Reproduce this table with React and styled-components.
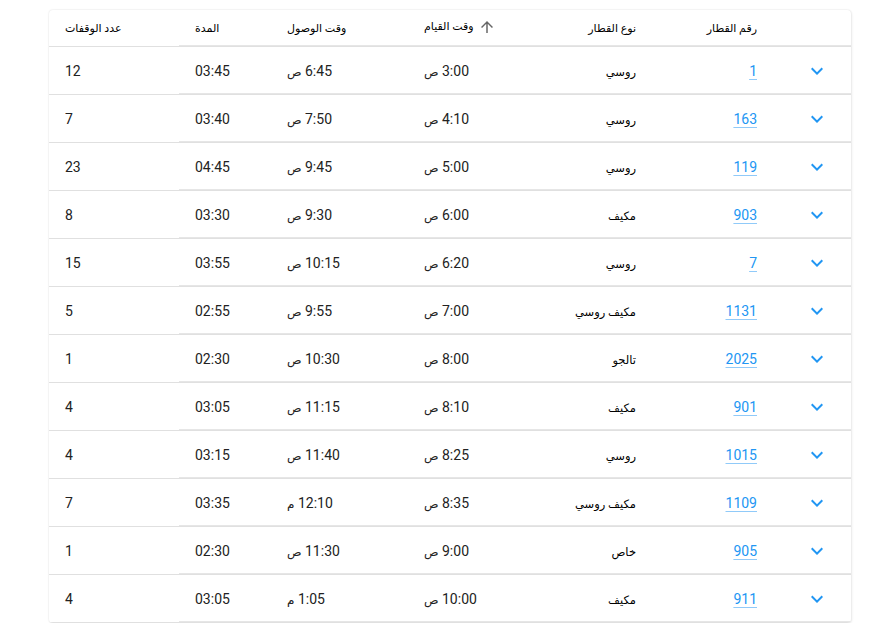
import React from 'react';
import styled, { createGlobalStyle } from 'styled-components';

const GlobalStyle = createGlobalStyle`
  body {
    margin: 0;
    background: #ffffff;
    font-family: Roboto, "DejaVu Sans", sans-serif;
  }
`;

const Page = styled.div`
  padding: 10px 0 0 49px;
`;

const Card = styled.div`
  width: 802px;
  background: #ffffff;
  border-radius: 4px;
  box-shadow: 0 0 2px rgba(0, 0, 0, 0.14), 1px 1px 3px rgba(0, 0, 0, 0.06);
  overflow: hidden;
`;

const Table = styled.table`
  width: 100%;
  border-collapse: separate;
  border-spacing: 0;
  table-layout: fixed;
  direction: rtl;
`;

const HeadCell = styled.th`
  height: 37px;
  padding: 0 16px;
  box-sizing: border-box;
  font-weight: 400;
  font-size: 11px;
  color: #000000;
  text-align: ${(p) => (p.$left ? 'left' : 'right')};
  border-bottom: 1px solid #e0e0e0;
  white-space: nowrap;
  &:not(:last-child) {
    box-shadow: inset 0 -1px 0 #e6e6e6;
  }
`;

const SortLabel = styled.span`
  display: inline-flex;
  align-items: center;
  gap: 4px;
  svg {
    width: 18px;
    height: 18px;
    fill: rgba(0, 0, 0, 0.6);
  }
`;

const Cell = styled.td`
  height: 48px;
  padding: 0 ${(p) => (p.$icon ? '22px' : '16px')};
  box-sizing: border-box;
  font-size: 14px;
  color: #222222;
  text-align: ${(p) => (p.$left ? 'left' : 'right')};
  border-bottom: 1px solid #e0e0e0;
  white-space: nowrap;
  &:not(:last-child) {
    box-shadow: inset 0 -1px 0 #e6e6e6;
  }
`;

const ArabicText = styled.span`
  font-size: 11.5px;
  color: #000000;
`;

const Suffix = styled.span`
  font-size: 12px;
`;

const TrainLink = styled.a`
  color: #2196f3;
  text-decoration: underline;
  text-decoration-color: #90caf9;
  text-underline-offset: 3px;
  cursor: pointer;
`;

const ExpandButton = styled.span`
  display: inline-flex;
  vertical-align: middle;
  svg {
    width: 24px;
    height: 24px;
    fill: #2196f3;
  }
`;

const trains = [
  ['1', 'روسي', '3:00', 'ص', '6:45', 'ص', '03:45', '12'],
  ['163', 'روسي', '4:10', 'ص', '7:50', 'ص', '03:40', '7'],
  ['119', 'روسي', '5:00', 'ص', '9:45', 'ص', '04:45', '23'],
  ['903', 'مكيف', '6:00', 'ص', '9:30', 'ص', '03:30', '8'],
  ['7', 'روسي', '6:20', 'ص', '10:15', 'ص', '03:55', '15'],
  ['1131', 'مكيف روسي', '7:00', 'ص', '9:55', 'ص', '02:55', '5'],
  ['2025', 'تالجو', '8:00', 'ص', '10:30', 'ص', '02:30', '1'],
  ['901', 'مكيف', '8:10', 'ص', '11:15', 'ص', '03:05', '4'],
  ['1015', 'روسي', '8:25', 'ص', '11:40', 'ص', '03:15', '4'],
  ['1109', 'مكيف روسي', '8:35', 'ص', '12:10', 'م', '03:35', '7'],
  ['905', 'خاص', '9:00', 'ص', '11:30', 'ص', '02:30', '1'],
  ['911', 'مكيف', '10:00', 'ص', '1:05', 'م', '03:05', '4'],
];

const ChevronDown = () => (
  <svg viewBox="0 0 24 24">
    <path d="M16.59 8.59 12 13.17 7.41 8.59 6 10l6 6 6-6z" />
  </svg>
);

const ArrowUp = () => (
  <svg viewBox="0 0 24 24">
    <path d="M4 12l1.41 1.41L11 7.83V20h2V7.83l5.58 5.59L20 12l-8-8-8 8z" />
  </svg>
);

export default function App() {
  return (
    <Page>
      <GlobalStyle />
      <Card>
        <Table>
          <colgroup>
            <col style={{ width: 78 }} />
            <col style={{ width: 121 }} />
            <col style={{ width: 122 }} />
            <col style={{ width: 122 }} />
            <col style={{ width: 137 }} />
            <col style={{ width: 92 }} />
            <col style={{ width: 130 }} />
          </colgroup>
          <thead>
            <tr>
              <HeadCell />
              <HeadCell>رقم القطار</HeadCell>
              <HeadCell>نوع القطار</HeadCell>
              <HeadCell $left>
                <SortLabel>
                  <ArrowUp />
                  وقت القيام
                </SortLabel>
              </HeadCell>
              <HeadCell $left>وقت الوصول</HeadCell>
              <HeadCell $left>المدة</HeadCell>
              <HeadCell $left>عدد الوقفات</HeadCell>
            </tr>
          </thead>
          <tbody>
            {trains.map(([num, type, dep, depSuffix, arr, arrSuffix, dur, stops]) => (
              <tr key={num}>
                <Cell $icon>
                  <ExpandButton>
                    <ChevronDown />
                  </ExpandButton>
                </Cell>
                <Cell>
                  <TrainLink>{num}</TrainLink>
                </Cell>
                <Cell>
                  <ArabicText>{type}</ArabicText>
                </Cell>
                <Cell $left>
                  {dep} <Suffix>{depSuffix}</Suffix>
                </Cell>
                <Cell $left>
                  {arr} <Suffix>{arrSuffix}</Suffix>
                </Cell>
                <Cell $left>{dur}</Cell>
                <Cell $left>{stops}</Cell>
              </tr>
            ))}
          </tbody>
        </Table>
      </Card>
    </Page>
  );
}
